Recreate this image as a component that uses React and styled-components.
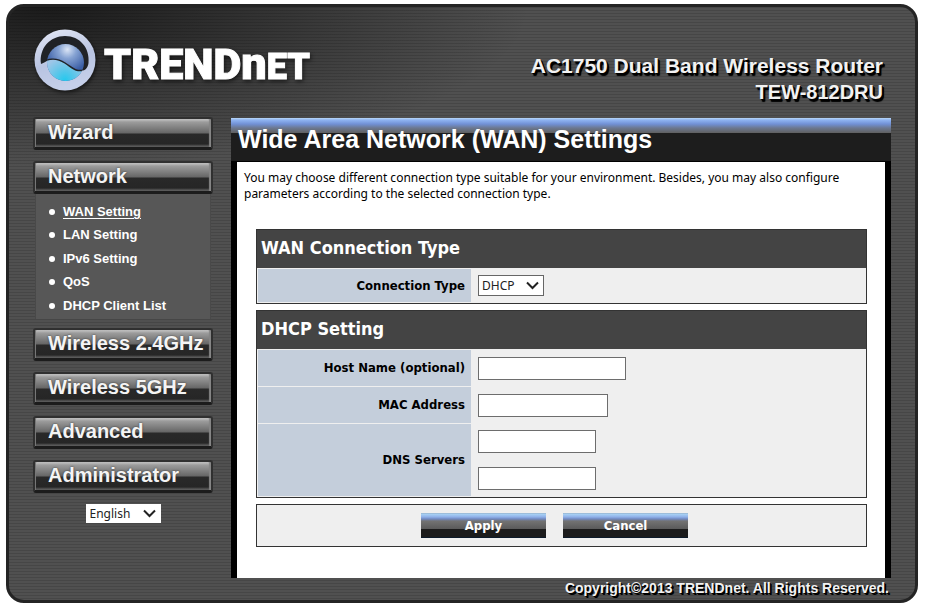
import React, { useState } from "react";
import styled, { createGlobalStyle } from "styled-components";

const ui = '"DejaVu Sans Condensed", "DejaVu Sans", sans-serif';
const body = '"Noto Sans", sans-serif';
const arial = '"Liberation Sans", Arial, sans-serif';

const GlobalStyle = createGlobalStyle`
  * { box-sizing: border-box; }
  body { margin: 0; background: #fff; }
`;

const Shell = styled.div`
  margin: 4px 9px 10px 6px;
  border: 3px solid #242424;
  border-radius: 18px;
  padding: 0 24px 0 25px;
  background:
    repeating-linear-gradient(to bottom, rgba(0, 0, 0, 0.13) 0 1px, transparent 1px 3px),
    radial-gradient(ellipse 480px 160px at 40px 0, #1b1b1b, rgba(27, 27, 27, 0)),
    #505050;
`;

const Header = styled.header`
  display: flex;
  justify-content: space-between;
  height: 111px;
`;

const Logo = styled.a`
  display: flex;
  align-items: center;
  gap: 8px;
  margin-top: 22px;
  height: 62px;
  color: #fff;
  text-decoration: none;
  filter: drop-shadow(1px 2px 2px rgba(0, 0, 0, 0.6));
  svg { display: block; }
`;

const Wordmark = styled.span`
  display: flex;
  align-items: baseline;
  padding-top: 11px;
  font: 900 43px/54px Roboto, ${arial};
  -webkit-text-stroke: 1px #fff;
`;

const WordTail = styled.span`
  font-size: ${(p) => p.$size}px;
`;

const Model = styled.div`
  margin: 46px 8px 0 0;
  text-align: right;
  font: bold 21px/26px ${arial};
  color: #f2f2f2;
  text-shadow: 1px 1px 0 #000, 2px 2px 0 #000, 2px 3px 1px #000;
`;

const ModelNumber = styled.div`
  font-size: 20px;
`;

const Columns = styled.div`
  display: grid;
  grid-template-columns: 180px minmax(0, 1fr);
  gap: 17px;
`;

const Sidebar = styled.nav`
  display: flex;
  flex-direction: column;
  margin: -1px 0 0 -1px;
  padding-right: 1px;
`;

const MenuButton = styled.button`
  width: 100%;
  height: 33px;
  margin: 0 0 ${(p) => (p.$open ? 0 : 11)}px;
  padding: 0 0 3px 13px;
  text-align: left;
  white-space: nowrap;
  font: bold 20px/24px ${arial};
  color: #f4f4f4;
  text-shadow: 0 0 2px #333;
  border: 2px solid #303030;
  border-bottom: 3px solid #1c1c1c;
  border-radius: 3px;
  background: linear-gradient(to bottom, #c8c8c8 0, #9c9c9c 3px, #666 14px, #292929 15px, #262626 25px, #555 27px) padding-box;
  box-shadow: inset -2px 0 1px #858585, inset 1px 0 0 #777;
  cursor: pointer;
`;

const SubMenu = styled.ul`
  margin: 0 2px 9px;
  padding: 6px 0 0 13px;
  height: 125px;
  list-style: none;
  border-left: 1px solid #494949;
  border-right: 1px solid #494949;
  background: #575757;
`;

const SubItem = styled.li`
  display: flex;
  align-items: center;
  gap: 8px;
  height: 24px;
  margin-bottom: ${(p) => (p.$tight ? -1 : 0)}px;
  font: bold 13px/16px ${arial};
  color: #fff;
  &::before {
    content: "";
    width: 6px;
    height: 6px;
    border-radius: 50%;
    background: #fff;
  }
`;

const SubLink = styled.a`
  color: #fff;
  text-decoration: ${(p) => (p.$active ? "underline" : "none")};
  text-underline-offset: 2px;
`;

const SelectBox = styled.span`
  display: inline-grid;
  align-items: center;
  align-self: ${(p) => (p.$center ? "center" : "auto")};
  width: ${(p) => p.$w}px;
  > * { grid-area: 1 / 1; }
  svg {
    justify-self: end;
    margin-right: 5px;
    pointer-events: none;
  }
`;

const Select = styled.select`
  appearance: none;
  width: 100%;
  height: ${(p) => p.$h}px;
  padding: 0 3px;
  border: 1px solid ${(p) => p.$line};
  border-radius: 0;
  background: #fff;
  color: #222;
  font: 12px/16px ${body};
`;

const Main = styled.main`
  border: solid #000;
  border-width: 0 6px;
  background: #fff;
`;

const TitleBar = styled.div`
  margin: 0 -6px;
  height: 44px;
  padding: 8px 7px 0;
  background: linear-gradient(to bottom, #b9d8f8 0, #8fb4f2 2px, #7191d6 6px, #6c7890 10px, #606060 15px, #1d1d1d 15px, #1d1d1d 43px, #000 43px);
`;

const Title = styled.h1`
  margin: 0;
  font: bold 25px/26px ${arial};
  color: #fff;
`;

const Intro = styled.p`
  margin: 0;
  padding: 8px 7px 0;
  min-height: 67px;
  font: 12px/16px ${body};
  color: #000;
`;

const Form = styled.form`
  display: grid;
  gap: 6px;
  margin: 0;
  padding: 0 18px 31px 19px;
`;

const Panel = styled.section`
  border: 1px solid #333;
  background: #efefef;
`;

const PanelTitle = styled.h2`
  margin: 0;
  padding: 0 4px;
  height: 38px;
  background: #444;
  color: #fff;
  font: bold 18px/36px ${ui};
`;

const Row = styled.div`
  display: grid;
  grid-template-columns: 213px minmax(0, 1fr);
  gap: 7px;
  margin: 1px;
  min-height: ${(p) => p.$h}px;
`;

const Label = styled.label`
  display: flex;
  align-items: center;
  justify-content: flex-end;
  padding-right: 6px;
  background: #c4cedb;
  color: #000;
  font: bold 13px/16px ${ui};
`;

const Controls = styled.div`
  display: grid;
  align-content: center;
  gap: 14px;
`;

const Input = styled.input`
  width: ${(p) => p.$w}px;
  height: 23px;
  padding: 1px 3px;
  border: 1px solid #6d6d6d;
  border-radius: 0;
  background: #fff;
  font: 12px/16px ${body};
`;

const Actions = styled.div`
  display: flex;
  justify-content: center;
  gap: 17px;
  padding: 8px 22px 8px 8px;
  height: 43px;
  border: 1px solid #333;
  background: #efefef;
`;

const ActionButton = styled.button`
  width: 125px;
  height: 25px;
  padding: 2px 0 0;
  border: solid #0c1a2a;
  border-width: 0 0 1px;
  color: #fff;
  font: bold 13px/22px ${ui};
  background: linear-gradient(to bottom, #90a8c0 0, #a9d2f5 1px, #8fb0e8 4px, #7088c0 6px, #737373 8px, #5a5a5a 16px, #1c1c1c 16px, #1c1c1c 25px);
  cursor: pointer;
`;

const Footer = styled.footer`
  height: 22px;
  padding: 0 2px 0 0;
  text-align: right;
  font: bold 14px/20px ${arial};
  color: #f2f2f2;
  text-shadow: 1px 1px 0 #000, 2px 2px 0 #000;
`;

const Chevron = () => (
  <svg width="13" height="9" viewBox="0 0 13 9" fill="none" stroke="#222" strokeWidth="2">
    <path d="M1 1.5L6.5 7L12 1.5" />
  </svg>
);

const Emblem = () => (
  <svg width="62" height="62" viewBox="0 0 62 62" aria-hidden="true">
    <defs>
      <linearGradient id="ring" x1="0" y1="0" x2="0.3" y2="1">
        <stop offset="0" stopColor="#e4e8f5" />
        <stop offset="0.6" stopColor="#b9c4e2" />
        <stop offset="1" stopColor="#c5cfe9" />
      </linearGradient>
      <radialGradient id="sky" cx="0.55" cy="0.15" r="0.6">
        <stop offset="0" stopColor="#dbe5f6" />
        <stop offset="0.4" stopColor="#86a3d3" />
        <stop offset="1" stopColor="#3c5fa6" />
      </radialGradient>
      <radialGradient id="sea" gradientUnits="userSpaceOnUse" cx="31" cy="51" r="23">
        <stop offset="0" stopColor="#25c8ee" />
        <stop offset="0.5" stopColor="#62c6e9" />
        <stop offset="1" stopColor="#9fc6e8" />
      </radialGradient>
      <clipPath id="globe"><circle cx="31.5" cy="33.5" r="18.5" /></clipPath>
    </defs>
    <circle cx="31" cy="31" r="30.5" fill="url(#ring)" />
    <path d="M7 35C5 19 16 7 31 7S56 19 54.5 34C54 38 52 41 49 41.5L42 42C34 40 29 30 18 30.5C14 30.5 12 33 7 35Z" fill="#202226" />
    <circle cx="31.5" cy="33.5" r="18.5" fill="url(#sky)" />
    <g clipPath="url(#globe)">
      <path d="M7 34C13 30 22 28 31 34S42 44 53 40V55H7Z" fill="url(#sea)" />
      <path d="M7 34C13 30 22 28 31 34S42 44 53 40" fill="none" stroke="#202226" strokeWidth="1.5" />
    </g>
  </svg>
);

const subItems = ["WAN Setting", "LAN Setting", "IPv6 Setting", "QoS", "DHCP Client List"];
const sections = ["Wireless 2.4GHz", "Wireless 5GHz", "Advanced", "Administrator"];

export default function App() {
  const [active, setActive] = useState("WAN Setting");
  return (
    <>
      <GlobalStyle />
      <Shell>
        <Header>
          <Logo href="#" aria-label="TRENDnet">
            <Emblem />
            <Wordmark>
              TREND<WordTail $size={45}>n</WordTail><WordTail $size={36}>ET</WordTail>
            </Wordmark>
          </Logo>
          <Model>
            AC1750 Dual Band Wireless Router
            <ModelNumber>TEW-812DRU</ModelNumber>
          </Model>
        </Header>
        <Columns>
          <Sidebar>
            <MenuButton type="button">Wizard</MenuButton>
            <MenuButton type="button" $open>Network</MenuButton>
            <SubMenu>
              {subItems.map((item, i) => (
                <SubItem key={item} $tight={i % 2 === 0}>
                  <SubLink href="#" $active={item === active} onClick={() => setActive(item)}>{item}</SubLink>
                </SubItem>
              ))}
            </SubMenu>
            {sections.map((name) => <MenuButton type="button" key={name}>{name}</MenuButton>)}
            <SelectBox $w={75} $center>
              <Select $h={19} $line="#fff" aria-label="Language"><option>English</option></Select>
              <Chevron />
            </SelectBox>
          </Sidebar>
          <Main>
            <TitleBar><Title>Wide Area Network (WAN) Settings</Title></TitleBar>
            <Intro>
              You may choose different connection type suitable for your environment. Besides, you may also configure
              parameters according to the selected connection type.
            </Intro>
            <Form onSubmit={(e) => e.preventDefault()}>
              <Panel>
                <PanelTitle>WAN Connection Type</PanelTitle>
                <Row $h={33}>
                  <Label htmlFor="type">Connection Type</Label>
                  <Controls>
                    <SelectBox $w={66}>
                      <Select id="type" $h={21} $line="#666"><option>DHCP</option></Select>
                      <Chevron />
                    </SelectBox>
                  </Controls>
                </Row>
              </Panel>
              <Panel>
                <PanelTitle>DHCP Setting</PanelTitle>
                <Row $h={36}>
                  <Label htmlFor="host">Host Name (optional)</Label>
                  <Controls><Input id="host" $w={148} /></Controls>
                </Row>
                <Row $h={36}>
                  <Label htmlFor="mac">MAC Address</Label>
                  <Controls><Input id="mac" $w={130} /></Controls>
                </Row>
                <Row $h={72}>
                  <Label htmlFor="dns1">DNS Servers</Label>
                  <Controls>
                    <Input id="dns1" $w={118} />
                    <Input id="dns2" $w={118} aria-label="Secondary DNS server" />
                  </Controls>
                </Row>
              </Panel>
              <Actions>
                <ActionButton type="submit">Apply</ActionButton>
                <ActionButton type="reset">Cancel</ActionButton>
              </Actions>
            </Form>
          </Main>
        </Columns>
        <Footer>Copyright©2013 TRENDnet. All Rights Reserved.</Footer>
      </Shell>
    </>
  );
}
